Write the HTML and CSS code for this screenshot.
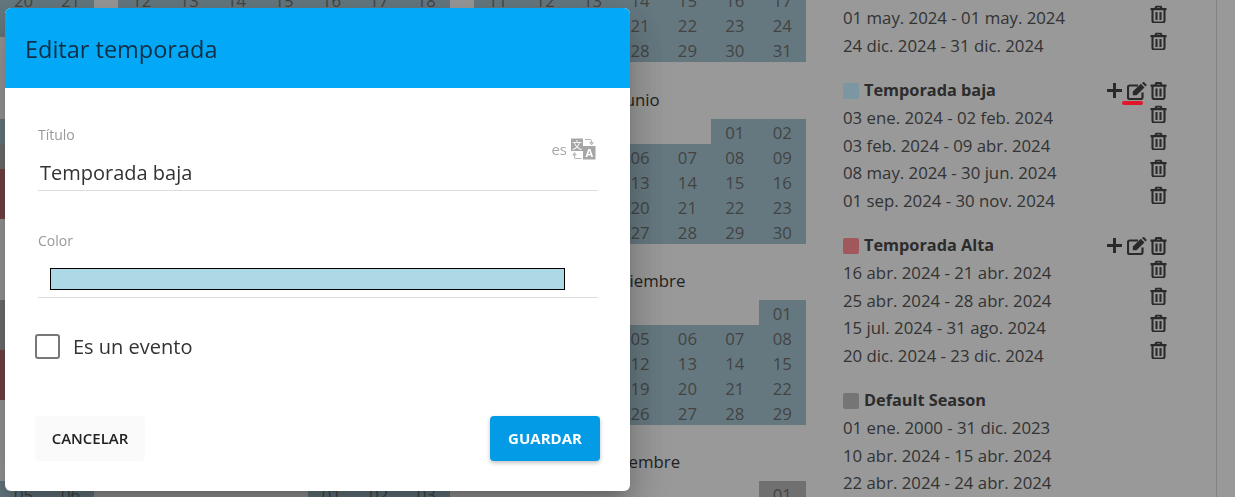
FILE: index.html
```html
<!DOCTYPE html>
<html lang="es">
<head>
    <meta charset="UTF-8">
    <title>Temporadas</title>
    <link rel="stylesheet" href="styles.css">
</head>
<body>

    <svg class="icon-defs" width="0" height="0">
        <symbol id="i-trash" viewBox="0 0 17 18">
            <path d="M0.5 3.600H16.500M5.200 3.400L6.300 1H10.700L11.800 3.400M2.500 4V15.200A1.800 1.800 0 0 0 4.300 17H12.700A1.800 1.800 0 0 0 14.500 15.200V4M6.500 6.500V14.500M10.500 6.500V14.500" fill="none" stroke="currentColor" stroke-width="2.100"/>
        </symbol>
        <symbol id="i-edit" viewBox="0 0 20 18">
            <path d="M15.500 10.500V15.300A1.700 1.700 0 0 1 13.800 17H2.700A1.700 1.700 0 0 1 1 15.300V5.200A1.700 1.700 0 0 1 2.700 3.500H11" fill="none" stroke="currentColor" stroke-width="2.200"/>
            <path d="M5.800 9.400L13.800 1.800L17.500 5.500L9.500 13.200H5.800ZM14.900 0.900L16 0.200Q16.600 -0.200 17.200 0.300L19.400 2.500Q19.900 3.100 19.400 3.700L18.500 4.500Z" fill="currentColor"/>
        </symbol>
        <symbol id="i-plus" viewBox="0 0 15 15">
            <path d="M7.500 0V15M0 7.500H15" fill="none" stroke="currentColor" stroke-width="3"/>
        </symbol>
    </svg>

    <div class="page">
        <div class="calendars">
            <div class="cal-col cal-col-first">
                <div class="month">
                    <h4>Enero</h4>
                    <div class="days">
                        <span class="baja">06</span><span class="baja">07</span>
                        <span class="baja">13</span><span class="baja">14</span>
                        <span class="baja">20</span><span class="baja">21</span>
                        <span class="baja"></span><span class="baja"></span>
                    </div>
                </div>
                <div class="month">
                    <h4></h4>
                    <div class="days">
                        <span class="baja"></span><span class="baja"></span>
                        <span class="default"></span><span class="default"></span>
                        <span class="alta"></span><span class="alta"></span>
                        <span class="alta"></span><span class="alta"></span>
                    </div>
                </div>
                <div class="month">
                    <h4></h4>
                    <div class="days">
                        <span class="default"></span><span class="default"></span>
                        <span class="default"></span><span class="default"></span>
                        <span class="alta"></span><span class="alta"></span>
                        <span class="alta"></span><span class="alta"></span>
                    </div>
                </div>
                <div class="month">
                    <h4></h4>
                    <div class="days">
                        <span class="baja">05</span><span class="baja">06</span>
                    </div>
                </div>
            </div>

            <div class="cal-col">
                <div class="month">
                    <h4>Febrero</h4>
                    <div class="days days-week">
                        <span></span><span></span><span></span><span class="baja">01</span><span class="baja">02</span><span class="baja">03</span><span class="baja">04</span>
                        <span class="baja">05</span><span class="baja">06</span><span class="baja">07</span><span class="baja">08</span><span class="baja">09</span><span class="baja">10</span><span class="baja">11</span>
                        <span class="baja">12</span><span class="baja">13</span><span class="baja">14</span><span class="baja">15</span><span class="baja">16</span><span class="baja">17</span><span class="baja">18</span>
                    </div>
                </div>
                <div class="month">
                    <h4></h4>
                    <div class="days days-week"></div>
                </div>
                <div class="month">
                    <h4></h4>
                    <div class="days days-week"></div>
                </div>
                <div class="month">
                    <h4></h4>
                    <div class="days days-week">
                        <span></span><span></span><span></span><span></span><span class="baja">01</span><span class="baja">02</span><span class="baja">03</span>
                    </div>
                </div>
            </div>

            <div class="cal-col">
                <div class="month">
                    <h4>Marzo</h4>
                    <div class="days days-week">
                        <span></span><span></span><span></span><span></span><span class="baja">01</span><span class="baja">02</span><span class="baja">03</span>
                        <span class="baja">04</span><span class="baja">05</span><span class="baja">06</span><span class="baja">07</span><span class="baja">08</span><span class="baja">09</span><span class="baja">10</span>
                        <span class="baja">11</span><span class="baja">12</span><span class="baja">13</span><span class="baja">14</span><span class="baja">15</span><span class="baja">16</span><span class="baja">17</span>
                        <span class="baja"></span><span class="baja"></span><span class="baja"></span><span class="baja">21</span><span class="baja">22</span><span class="baja">23</span><span class="baja">24</span>
                        <span class="baja"></span><span class="baja"></span><span class="baja"></span><span class="baja">28</span><span class="baja">29</span><span class="baja">30</span><span class="baja">31</span>
                    </div>
                </div>
                <div class="month">
                    <h4>Junio</h4>
                    <div class="days days-week">
                        <span></span><span></span><span></span><span></span><span></span><span class="baja">01</span><span class="baja">02</span>
                        <span class="baja"></span><span class="baja"></span><span class="baja"></span><span class="baja">06</span><span class="baja">07</span><span class="baja">08</span><span class="baja">09</span>
                        <span class="baja"></span><span class="baja"></span><span class="baja"></span><span class="baja">13</span><span class="baja">14</span><span class="baja">15</span><span class="baja">16</span>
                        <span class="baja"></span><span class="baja"></span><span class="baja"></span><span class="baja">20</span><span class="baja">21</span><span class="baja">22</span><span class="baja">23</span>
                        <span class="baja"></span><span class="baja"></span><span class="baja"></span><span class="baja">27</span><span class="baja">28</span><span class="baja">29</span><span class="baja">30</span>
                    </div>
                </div>
                <div class="month">
                    <h4>Septiembre</h4>
                    <div class="days days-week">
                        <span></span><span></span><span></span><span></span><span></span><span></span><span class="baja">01</span>
                        <span class="baja"></span><span class="baja"></span><span class="baja"></span><span class="baja">05</span><span class="baja">06</span><span class="baja">07</span><span class="baja">08</span>
                        <span class="baja"></span><span class="baja"></span><span class="baja"></span><span class="baja">12</span><span class="baja">13</span><span class="baja">14</span><span class="baja">15</span>
                        <span class="baja"></span><span class="baja"></span><span class="baja"></span><span class="baja">19</span><span class="baja">20</span><span class="baja">21</span><span class="baja">22</span>
                        <span class="baja"></span><span class="baja"></span><span class="baja"></span><span class="baja">26</span><span class="baja">27</span><span class="baja">28</span><span class="baja">29</span>
                    </div>
                </div>
                <div class="month">
                    <h4>Diciembre</h4>
                    <div class="days days-week">
                        <span></span><span></span><span></span><span></span><span></span><span></span><span class="default">01</span>
                    </div>
                </div>
            </div>
        </div>

        <!-- Season list -->
        <div class="seasons">
            <div class="season">
                <div class="season-body">
                    <div class="ranges">
                        <div>01 may. 2024 - 01 may. 2024</div>
                        <div>24 dic. 2024 - 31 dic. 2024</div>
                    </div>
                    <div class="trash-col">
                        <svg class="i-trash"><use href="#i-trash"/></svg>
                        <svg class="i-trash"><use href="#i-trash"/></svg>
                    </div>
                </div>
            </div>

            <div class="season">
                <div class="season-title">
                    <span class="swatch swatch-baja"></span>
                    <b>Temporada baja</b>
                    <div class="actions">
                        <svg class="i-plus"><use href="#i-plus"/></svg>
                        <span class="edit-wrap">
                            <svg class="i-edit"><use href="#i-edit"/></svg>
                            <span class="red-mark"></span>
                        </span>
                        <svg class="i-trash"><use href="#i-trash"/></svg>
                    </div>
                </div>
                <div class="season-body">
                    <div class="ranges">
                        <div>03 ene. 2024 - 02 feb. 2024</div>
                        <div>03 feb. 2024 - 09 abr. 2024</div>
                        <div>08 may. 2024 - 30 jun. 2024</div>
                        <div>01 sep. 2024 - 30 nov. 2024</div>
                    </div>
                    <div class="trash-col">
                        <svg class="i-trash"><use href="#i-trash"/></svg>
                        <svg class="i-trash"><use href="#i-trash"/></svg>
                        <svg class="i-trash"><use href="#i-trash"/></svg>
                        <svg class="i-trash"><use href="#i-trash"/></svg>
                    </div>
                </div>
            </div>

            <div class="season">
                <div class="season-title">
                    <span class="swatch swatch-alta"></span>
                    <b>Temporada Alta</b>
                    <div class="actions">
                        <svg class="i-plus"><use href="#i-plus"/></svg>
                        <span class="edit-wrap">
                            <svg class="i-edit"><use href="#i-edit"/></svg>
                        </span>
                        <svg class="i-trash"><use href="#i-trash"/></svg>
                    </div>
                </div>
                <div class="season-body">
                    <div class="ranges">
                        <div>16 abr. 2024 - 21 abr. 2024</div>
                        <div>25 abr. 2024 - 28 abr. 2024</div>
                        <div>15 jul. 2024 - 31 ago. 2024</div>
                        <div>20 dic. 2024 - 23 dic. 2024</div>
                    </div>
                    <div class="trash-col">
                        <svg class="i-trash"><use href="#i-trash"/></svg>
                        <svg class="i-trash"><use href="#i-trash"/></svg>
                        <svg class="i-trash"><use href="#i-trash"/></svg>
                        <svg class="i-trash"><use href="#i-trash"/></svg>
                    </div>
                </div>
            </div>

            <div class="season">
                <div class="season-title">
                    <span class="swatch swatch-default"></span>
                    <b>Default Season</b>
                </div>
                <div class="season-body">
                    <div class="ranges">
                        <div>01 ene. 2000 - 31 dic. 2023</div>
                        <div>10 abr. 2024 - 15 abr. 2024</div>
                        <div>22 abr. 2024 - 24 abr. 2024</div>
                    </div>
                </div>
            </div>
        </div>
    </div>

    <div class="overlay"></div>

    <!-- Dialog -->
    <div class="dialog">
        <div class="dialog-header">Editar temporada</div>
        <div class="dialog-body">
            <div class="field">
                <label>Título</label>
                <div class="field-value">Temporada baja</div>
                <div class="lang">
                    <span>es</span>
                    <svg width="25" height="22" viewBox="0 0 25 22">
                        <rect x="0" y="0.5" width="12" height="12.5" fill="#a6a6a6"/>
                        <text x="6" y="10.5" class="lang-cjk">文</text>
                        <rect x="12" y="8" width="12.5" height="13.5" fill="#a6a6a6"/>
                        <text x="18.2" y="19" class="lang-a">A</text>
                        <path d="M14 1.500H19Q20.500 1.500 20.500 3V5.500M18.800 4.600H22.200L20.500 7ZM10.500 20.500H5Q3.500 20.500 3.500 19V16M1.800 17H5.200L3.500 14.500Z" fill="none" stroke="#b5b5b5"/>
                    </svg>
                </div>
            </div>
            <div class="field field-color">
                <label>Color</label>
                <div class="color-bar"></div>
            </div>
        </div>
        <div class="dialog-check">
            <span class="checkbox"></span>
            <span>Es un evento</span>
        </div>
        <div class="dialog-actions">
            <button class="btn btn-cancel">CANCELAR</button>
            <button class="btn btn-save">GUARDAR</button>
        </div>
    </div>

</body>
</html>
```

FILE: styles.css
```css
html, body {
    margin: 0;
    height: 100%;
    overflow: hidden;
    background-color: #fff;
    font-family: 'Open Sans', 'Noto Sans', sans-serif;
    color: #555;
}
.icon-defs {
    display: block;
    height: 0;
}

.page {
    display: flex;
    height: 497px;
    overflow: hidden;
}

/* Calendar */
.calendars {
    display: flex;
    gap: 24px;
    width: 806px;
    margin-top: -94px;
    flex-shrink: 0;
}
.cal-col {
    flex: 1;
}
.cal-col-first {
    flex: none;
    width: 94px;
}
.month h4 {
    height: 31px;
    margin: 0;
    font-size: 16.8px;
    font-weight: 500;
    line-height: 23px;
    color: #383838;
    text-align: center;
}
.month:first-child {
    margin-bottom: 1px;
}
.days {
    display: grid;
    grid-template-columns: repeat(2, 1fr);
    grid-auto-rows: 25px;
    height: 150px;
    font-size: 16.8px;
    line-height: 28px;
    text-align: center;
    color: #717171;
}
.days-week {
    grid-template-columns: repeat(7, 1fr);
}
.baja { background-color: #a9c9d5; }
.alta { background-color: #c27076; }
.default { background-color: #bbb; }

/* Season list */
.seasons {
    width: 373px;
    margin-left: 37px;
    padding-top: 4.25px;
    border-right: 1px solid #ddd;
    font-size: 16.8px;
    line-height: 27.5px;
}
.season {
    margin-bottom: 17.5px;
}
.season-title {
    display: flex;
    align-items: center;
    color: #4a4a4a;
}
.season-title b {
    font-size: 16.3px;
    font-weight: 700;
}
/* swatches sit above the overlay so they keep their lighter tone */
.swatch {
    position: relative;
    z-index: 11;
    width: 16px;
    height: 16px;
    margin-right: 5px;
    border-radius: 2px;
}
.swatch-baja { background-color: #7b97a2; }
.swatch-alta { background-color: #a0585b; }
.swatch-default { background-color: #757575; }
.actions {
    display: flex;
    align-items: center;
    margin-left: auto;
    margin-right: 49px;
    color: #474747;
}
.season-body {
    display: flex;
    justify-content: space-between;
}
.trash-col {
    display: flex;
    flex-direction: column;
    margin-top: -3.75px;
    margin-right: 49px;
    color: #474747;
}
.i-trash {
    display: block;
    width: 17px;
    height: 18px;
    padding: 4.5px 0;
}
.actions .i-trash {
    padding: 0;
}
.i-plus {
    width: 15px;
    height: 15px;
    margin-right: 5px;
}
.edit-wrap {
    display: flex;
    margin-right: 3px;
}
.i-edit {
    width: 20px;
    height: 18px;
}
.red-mark {
    position: absolute;
    left: 1122px;
    top: 101px;
    z-index: 20;
    width: 21px;
    height: 4px;
    border-radius: 2px;
    background-color: #e0162b;
}

.overlay {
    position: fixed;
    inset: 0;
    z-index: 10;
    background-color: rgba(0, 0, 0, 0.4);
}

/* Dialog */
.dialog {
    position: fixed;
    left: 5px;
    top: 8px;
    z-index: 30;
    display: flex;
    flex-direction: column;
    width: 625px;
    height: 483px;
    overflow: hidden;
    border-radius: 6px;
    background-color: #fff;
    color: #333;
    box-shadow: 0 11px 15px -7px rgba(0, 0, 0, 0.2), 0 24px 38px 3px rgba(0, 0, 0, 0.14), 0 9px 46px 8px rgba(0, 0, 0, 0.12);
}
.dialog-header {
    height: 80px;
    padding-left: 20px;
    background-color: #03a9f6;
    color: #102f45;
    font-size: 23.5px;
    line-height: 82px;
    flex-shrink: 0;
}
.dialog-body {
    padding: 37px 32px 0 33px;
}
.field {
    position: relative;
    border-bottom: 1px solid #ddd;
}
.field label {
    display: block;
    padding-top: 1px;
    font-size: 14px;
    line-height: 18px;
    color: #999;
}
.field-value {
    height: 46px;
    padding: 14px 0 0 2px;
    box-sizing: border-box;
    font-size: 20px;
    line-height: 30px;
}
.lang {
    position: absolute;
    right: 2px;
    top: 13px;
    display: flex;
    align-items: center;
    gap: 4px;
    font-size: 15px;
    color: #aaa;
}
.lang-cjk {
    font-family: 'Noto Sans CJK SC', sans-serif;
    font-size: 10px;
    fill: #fff;
    text-anchor: middle;
}
.lang-a {
    font-size: 11px;
    font-weight: 700;
    fill: #fff;
    text-anchor: middle;
}
.field-color {
    margin-top: 40px;
}
.color-bar {
    box-sizing: border-box;
    width: 515px;
    height: 22px;
    margin: 18px 0 7px 12px;
    border: 1px solid #000;
    background-color: #add8e6;
}
.dialog-check {
    display: flex;
    align-items: center;
    gap: 13px;
    margin: 36px 0 0 30px;
    font-size: 20px;
    line-height: 25px;
}
.checkbox {
    box-sizing: border-box;
    width: 25px;
    height: 25px;
    border: 2px solid #777;
    border-radius: 3px;
}
.dialog-actions {
    display: flex;
    justify-content: space-between;
    margin-top: 57px;
    padding: 0 30px;
}
.btn {
    width: 110px;
    height: 45px;
    padding: 0 0 2px;
    border: none;
    border-radius: 4px;
    font-family: 'Open Sans', sans-serif;
    font-size: 15px;
    font-weight: 600;
    cursor: pointer;
}
.btn-cancel {
    background-color: #fafafa;
    color: #222;
}
.btn-save {
    background-color: #039be5;
    color: #fff;
    font-weight: 700;
    box-shadow: 0 2px 4px rgba(0, 0, 0, 0.25);
}
```
